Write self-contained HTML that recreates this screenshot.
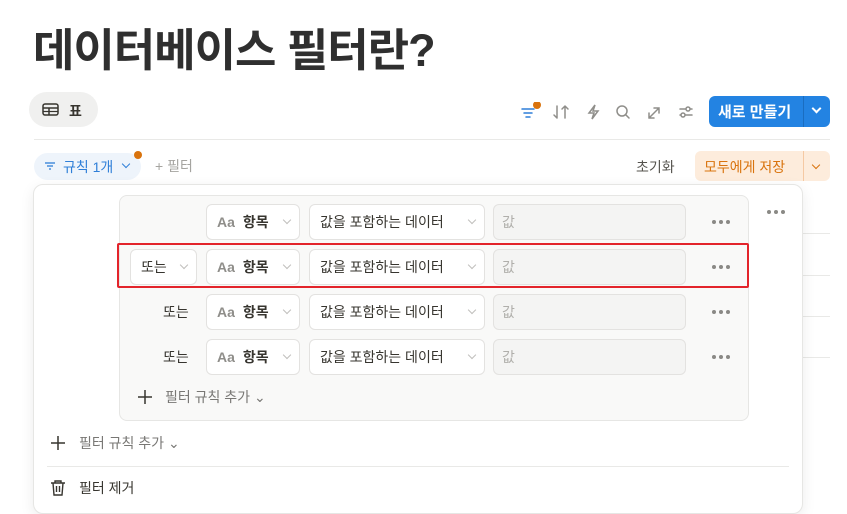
<!DOCTYPE html><html><head><meta charset="utf-8"><style>
*{box-sizing:border-box;margin:0;padding:0}
body{width:847px;height:507px;background:#fff;font-family:"Liberation Sans","Noto Sans CJK KR",sans-serif;position:relative;overflow:hidden;color:#37352f}
.a{position:absolute}
.dd{position:absolute;height:36px;border:1px solid #e3e2e0;border-radius:6px;background:#fff;font-size:14px;display:flex;align-items:center;padding:0 10px;color:#37352f}
.chev{position:absolute;right:9px;top:12px;width:6px;height:6px;border-right:1.2px solid #c0bfbc;border-bottom:1.2px solid #c0bfbc;transform:rotate(45deg)}
.val{position:absolute;height:36px;border:1px solid #e3e2e0;border-radius:6px;background:#f4f4f3;font-size:14px;color:#b0afab;display:flex;align-items:center;padding-left:8px}
.dots{position:absolute}
.aa{color:#8f8e8a;font-weight:bold;margin-right:8px}
</style></head><body>
<div class="a" style="left:33px;top:14px;font-size:45px;font-weight:bold;color:#2f2f2f;letter-spacing:-1px">데이터베이스 필터란?</div>
<div class="a" style="left:29px;top:92px;width:69px;height:35px;border-radius:18px;background:#f0f0ef"></div>
<svg class="a" style="left:42px;top:103px" width="18" height="14"><rect x="1" y="1" width="15" height="11" rx="2" fill="none" stroke="#37352f" stroke-width="1.5"/><line x1="1" y1="5" x2="16" y2="5" stroke="#37352f" stroke-width="1.5"/><line x1="1" y1="8.5" x2="16" y2="8.5" stroke="#37352f" stroke-width="1.2"/><line x1="7" y1="5" x2="7" y2="12" stroke="#37352f" stroke-width="1.5"/></svg>
<div class="a" style="left:69px;top:101px;font-size:14px;font-weight:bold">표</div>
<div class="a" style="left:34px;top:139px;width:796px;height:1px;background:#e9e9e7"></div>
<svg class="a" style="left:520px;top:102px" width="180" height="20" fill="none" stroke="#8f8e8a" stroke-width="1.5" stroke-linecap="round">
<g stroke="#2f7fd8"><line x1="2" y1="7" x2="14" y2="7"/><line x1="4" y1="11" x2="12" y2="11"/><line x1="6" y1="15" x2="10" y2="15"/></g>
<circle cx="17" cy="3" r="4" fill="#d9730d" stroke="none"/>
<path d="M37 4v12M34 13l3 3M45 16V4M42 7l3-3l3 3"/>
<path d="M75 3l-6 8h5l-2 6l6-8h-5z"/>
<circle cx="102" cy="9" r="5"/><path d="M106 13l3 3"/>
<path d="M129 16l10-10M134 6h5v5M129 11v5h5"/>
<path d="M160 7h12M160 13h12"/><circle cx="168" cy="7" r="2" fill="#fff"/><circle cx="163" cy="13" r="2" fill="#fff"/>
</svg>
<div class="a" style="left:709px;top:96px;width:121px;height:31px;background:#2383e2;border-radius:6px"></div>
<div class="a" style="left:718px;top:101px;font-size:15px;font-weight:bold;color:#fff">새로 만들기</div>
<div class="a" style="left:803px;top:96px;width:1px;height:31px;background:#1a6dc0"></div>
<div class="a" style="left:813px;top:105px;width:7px;height:7px;border-right:2px solid #fff;border-bottom:2px solid #fff;transform:rotate(45deg)"></div>
<div class="a" style="left:34px;top:153px;width:107px;height:27px;border-radius:14px;background:#eef4fb"></div>
<svg class="a" style="left:44px;top:161px" width="12" height="10" stroke="#2f7fd8" stroke-width="1.3"><line x1="1" y1="2" x2="11" y2="2"/><line x1="3" y1="5" x2="9" y2="5"/><line x1="5" y1="8" x2="7" y2="8"/></svg>
<div class="a" style="left:63px;top:157px;font-size:14px;color:#2f7fd8">규칙 1개</div>
<div class="a" style="left:123px;top:161px;width:6px;height:6px;border-right:1.5px solid #2f7fd8;border-bottom:1.5px solid #2f7fd8;transform:rotate(45deg)"></div>
<div class="a" style="left:134px;top:151px;width:8px;height:8px;border-radius:50%;background:#d9730d"></div>
<div class="a" style="left:155px;top:156px;font-size:14px;color:#a5a4a0">+ 필터</div>
<div class="a" style="left:636px;top:157px;font-size:14px;color:#55534e">초기화</div>
<div class="a" style="left:695px;top:151px;width:135px;height:30px;background:#fdecdc;border-radius:6px"></div>
<div class="a" style="left:704px;top:157px;font-size:14px;color:#d9730d">모두에게 저장</div>
<div class="a" style="left:803px;top:151px;width:1px;height:30px;background:#f5c9a3"></div>
<div class="a" style="left:813px;top:162px;width:6px;height:6px;border-right:1.5px solid #d9730d;border-bottom:1.5px solid #d9730d;transform:rotate(45deg)"></div>
<div class="a" style="left:800px;top:233px;width:30px;height:1px;background:#e9e9e7"></div>
<div class="a" style="left:800px;top:275px;width:30px;height:1px;background:#e9e9e7"></div>
<div class="a" style="left:800px;top:316px;width:30px;height:1px;background:#e9e9e7"></div>
<div class="a" style="left:800px;top:357px;width:30px;height:1px;background:#e9e9e7"></div>
<div class="a" style="left:33px;top:184px;width:770px;height:330px;background:#fff;border:1px solid #e6e6e4;border-radius:10px;box-shadow:0 4px 14px rgba(0,0,0,0.08)"></div>
<div class="a" style="left:119px;top:195px;width:630px;height:226px;background:#f9f9f8;border:1px solid #e6e6e4;border-radius:8px"></div>
<svg class="dots" style="left:766px;top:209px" width="20" height="6" fill="#8a8985"><circle cx="3" cy="3" r="2"/><circle cx="10" cy="3" r="2"/><circle cx="17" cy="3" r="2"/></svg>
<div class="dd" style="left:206px;top:204px;width:94px"><span class="aa">Aa</span><b>항목</b><i class="chev"></i></div>
<div class="dd" style="left:309px;top:204px;width:176px">값을 포함하는 데이터<i class="chev"></i></div>
<div class="val" style="left:493px;top:204px;width:193px">값</div>
<svg class="dots" style="left:711px;top:219px" width="20" height="6" fill="#8a8985"><circle cx="3" cy="3" r="2"/><circle cx="10" cy="3" r="2"/><circle cx="17" cy="3" r="2"/></svg>
<div class="dd" style="left:130px;top:249px;width:67px">또는<i class="chev"></i></div>
<div class="dd" style="left:206px;top:249px;width:94px"><span class="aa">Aa</span><b>항목</b><i class="chev"></i></div>
<div class="dd" style="left:309px;top:249px;width:176px">값을 포함하는 데이터<i class="chev"></i></div>
<div class="val" style="left:493px;top:249px;width:193px">값</div>
<svg class="dots" style="left:711px;top:264px" width="20" height="6" fill="#8a8985"><circle cx="3" cy="3" r="2"/><circle cx="10" cy="3" r="2"/><circle cx="17" cy="3" r="2"/></svg>
<div class="a" style="left:163px;top:302px;font-size:14px">또는</div>
<div class="dd" style="left:206px;top:294px;width:94px"><span class="aa">Aa</span><b>항목</b><i class="chev"></i></div>
<div class="dd" style="left:309px;top:294px;width:176px">값을 포함하는 데이터<i class="chev"></i></div>
<div class="val" style="left:493px;top:294px;width:193px">값</div>
<svg class="dots" style="left:711px;top:309px" width="20" height="6" fill="#8a8985"><circle cx="3" cy="3" r="2"/><circle cx="10" cy="3" r="2"/><circle cx="17" cy="3" r="2"/></svg>
<div class="a" style="left:163px;top:347px;font-size:14px">또는</div>
<div class="dd" style="left:206px;top:339px;width:94px"><span class="aa">Aa</span><b>항목</b><i class="chev"></i></div>
<div class="dd" style="left:309px;top:339px;width:176px">값을 포함하는 데이터<i class="chev"></i></div>
<div class="val" style="left:493px;top:339px;width:193px">값</div>
<svg class="dots" style="left:711px;top:354px" width="20" height="6" fill="#8a8985"><circle cx="3" cy="3" r="2"/><circle cx="10" cy="3" r="2"/><circle cx="17" cy="3" r="2"/></svg>
<div class="a" style="left:117px;top:243px;width:632px;height:45px;border:2.5px solid #e3242b;border-radius:2px"></div>
<svg class="a" style="left:137px;top:389px" width="16" height="16" stroke="#37352f" stroke-width="1.5"><path d="M8 1v14M1 8h14"/></svg>
<div class="a" style="left:165px;top:387px;font-size:14px;color:#787774">필터 규칙 추가 ⌄</div>
<svg class="a" style="left:50px;top:435px" width="16" height="16" stroke="#37352f" stroke-width="1.5"><path d="M8 1v14M1 8h14"/></svg>
<div class="a" style="left:79px;top:433px;font-size:14px;color:#787774">필터 규칙 추가 ⌄</div>
<div class="a" style="left:47px;top:466px;width:742px;height:1px;background:#e9e9e7"></div>
<svg class="a" style="left:50px;top:479px" width="16" height="18" fill="none" stroke="#37352f" stroke-width="1.4"><path d="M1 4h14M5 4V2h6v2M3 4l1 12h8l1-12M6.5 7v6M9.5 7v6"/></svg>
<div class="a" style="left:79px;top:478px;font-size:14px;color:#37352f">필터 제거</div>
</body></html>
